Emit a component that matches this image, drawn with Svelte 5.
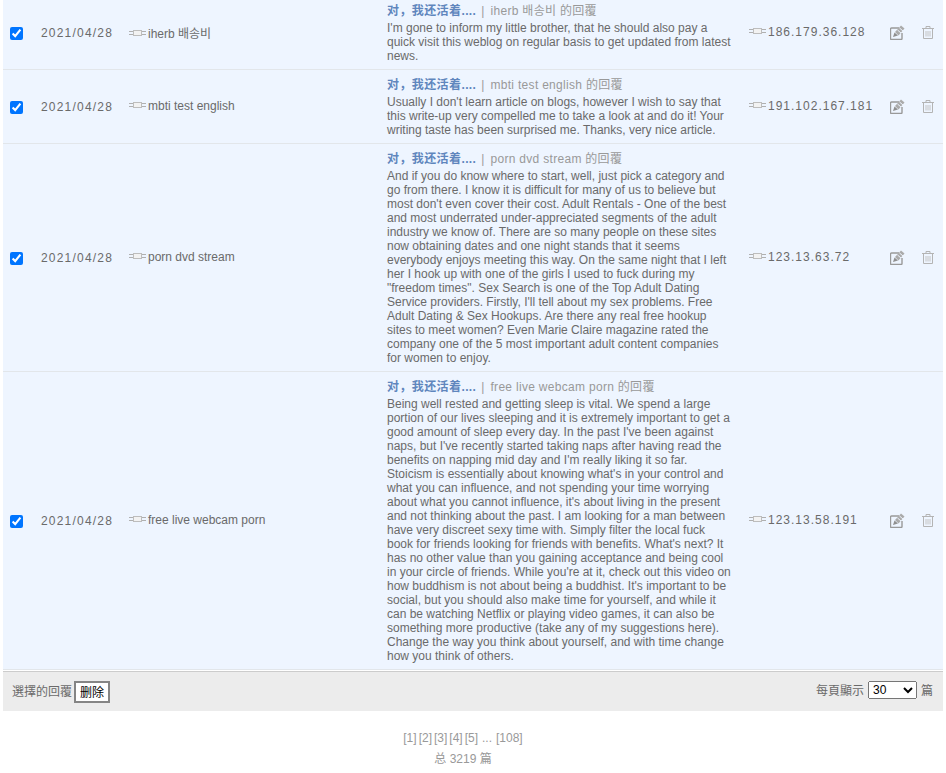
<script lang="ts">
	const rows = [
		{
			name: 'iherb 배송비',
			ip: '186.179.36.128',
			text: "I'm gone to inform my little brother, that he should also pay a quick visit this weblog on regular basis to get updated from latest news."
		},
		{
			name: 'mbti test english',
			ip: '191.102.167.181',
			text: "Usually I don't learn article on blogs, however I wish to say that this write-up very compelled me to take a look at and do it! Your writing taste has been surprised me. Thanks, very nice article."
		},
		{
			name: 'porn dvd stream',
			ip: '123.13.63.72',
			text: 'And if you do know where to start, well, just pick a category and go from there. I know it is difficult for many of us to believe but most don\'t even cover their cost. Adult Rentals - One of the best and most underrated under-appreciated segments of the adult industry we know of. There are so many people on these sites now obtaining dates and one night stands that it seems everybody enjoys meeting this way. On the same night that I left her I hook up with one of the girls I used to fuck during my "freedom times". Sex Search is one of the Top Adult Dating Service providers. Firstly, I\'ll tell about my sex problems. Free Adult Dating & Sex Hookups. Are there any real free hookup sites to meet women? Even Marie Claire magazine rated the company one of the 5 most important adult content companies for women to enjoy.'
		},
		{
			name: 'free live webcam porn',
			ip: '123.13.58.191',
			text: "Being well rested and getting sleep is vital. We spend a large portion of our lives sleeping and it is extremely important to get a good amount of sleep every day. In the past I've been against naps, but I've recently started taking naps after having read the benefits on napping mid day and I'm really liking it so far. Stoicism is essentially about knowing what's in your control and what you can influence, and not spending your time worrying about what you cannot influence, it's about living in the present and not thinking about the past. I am looking for a man between have very discreet sexy time with. Simply filter the local fuck book for friends looking for friends with benefits. What's next? It has no other value than you gaining acceptance and being cool in your circle of friends. While you're at it, check out this video on how buddhism is not about being a buddhist. It's important to be social, but you should also make time for yourself, and while it can be watching Netflix or playing video games, it can also be something more productive (take any of my suggestions here). Change the way you think about yourself, and with time change how you think of others."
		}
	];

	const pages = ['1', '2', '3', '4', '5'];
</script>

{#snippet plug()}
	<svg class="plug" viewBox="0 0 17 6" width="17" height="6">
		<path d="M0 1.500h4M0 4.500h4M13 1.500h4M13 4.500h4" stroke="#b0b0b0" fill="none" />
		<rect x="4.500" y="0.500" width="8" height="5" fill="#f2f2f2" stroke="#bdbdbd" />
	</svg>
{/snippet}

<div class="page">
	<table>
		<colgroup>
			<col style="width:33px" />
			<col style="width:88px" />
			<col style="width:258px" />
			<col style="width:362px" />
			<col style="width:141px" />
			<col style="width:32px" />
			<col style="width:26px" />
		</colgroup>
		<tbody>
			{#each rows as row}
				<tr>
					<td class="check"><input type="checkbox" checked /></td>
					<td class="date">2021/04/28</td>
					<td class="name">{@render plug()}<span>{row.name}</span></td>
					<td class="content">
						<div class="head">
							<b>对，我还活着....</b><span class="sep">|</span><span class="on">{row.name} 的回覆</span>
						</div>
						<p>{row.text}</p>
					</td>
					<td class="ip">{@render plug()}<span>{row.ip}</span></td>
					<td class="icon">
						<svg viewBox="0 0 16 15" width="16" height="15">
							<path d="M9 3H1.500a1 1 0 0 0-1 1v9.500a1 1 0 0 0 1 1H11a1 1 0 0 0 1-1V8" fill="none" stroke="#999" stroke-width="1.400" />
							<path d="M3 12l1.500-4.500 3.500 3z" fill="#8f8f8f" />
							<path d="M5 7l6-6.500 3.500 3-6 7z" fill="#ababab" />
							<path d="M7.500 5l3.500 3M9.500 3l3.500 3" stroke="#eef5ff" fill="none" />
						</svg>
					</td>
					<td class="icon">
						<svg viewBox="0 0 12 13" width="12" height="13">
							<path d="M0 2.500h12M4 2.500V.5h4v2" fill="none" stroke="#b4b4b4" />
							<path d="M1.500 3v9.500h9V3" fill="none" stroke="#b4b4b4" />
							<path d="M4 5v5.500M6 5v5.500M8 5v5.500" fill="none" stroke="#c4c4c4" />
						</svg>
					</td>
				</tr>
			{/each}
		</tbody>
	</table>

	<div class="toolbar">
		<div class="left">
			<span>選擇的回覆</span>
			<button type="button">删除</button>
		</div>
		<div class="right">
			<span>每頁顯示</span>
			<select>
				<option>30</option>
				<option>50</option>
				<option>100</option>
			</select>
			<span>篇</span>
		</div>
	</div>

	<div class="pager">
		<div class="links">
			{#each pages as p}
				<span>[{p}]</span>
			{/each}
			<span class="dots">...</span>
			<span>[108]</span>
		</div>
		<div class="total">总 3219 篇</div>
	</div>
</div>

<style>
	:global(body) {
		margin: 0;
		background: #fff;
		overflow: hidden;
	}

	.page {
		padding: 0 3px;
		height: 773px;
		overflow: hidden;
		font-family: 'Liberation Sans', 'Noto Sans CJK SC', sans-serif;
		font-size: 12px;
		color: #6a6a6a;
	}

	table {
		width: 940px;
		margin-top: -4px;
		table-layout: fixed;
		border-collapse: collapse;
	}

	td {
		padding: 0;
		background: #eef5ff;
		border-bottom: 1px solid #e2e6ea;
		vertical-align: middle;
	}

	.check {
		padding-left: 7px;
	}

	.check input {
		display: block;
		width: 13px;
		height: 13px;
		margin: 1px 0 0;
	}

	.date {
		padding-left: 5px;
		letter-spacing: 1.200px;
		white-space: nowrap;
	}

	.name,
	.ip {
		padding-left: 5px;
		padding-bottom: 1px;
		white-space: nowrap;
	}

	.ip span {
		letter-spacing: 1px;
	}

	.plug {
		margin-right: 2px;
		vertical-align: 2px;
	}

	.content {
		padding: 6px 11px 6px 5px;
	}

	.head {
		height: 19px;
		line-height: 18px;
		white-space: nowrap;
		color: #999;
	}

	.head b {
		color: #5f86bd;
		letter-spacing: 0.400px;
	}

	.sep {
		margin: 0 6px 0 5px;
	}

	.on {
		letter-spacing: 0.300px;
	}

	p {
		margin: 0;
		line-height: 14px;
	}

	.icon {
		padding-left: 5px;
	}

	.icon svg {
		display: block;
	}

	.toolbar {
		display: flex;
		justify-content: space-between;
		align-items: center;
		box-sizing: border-box;
		height: 40px;
		margin-top: 1px;
		padding: 0 9px;
		background: #ececec;
		border-top: 1px solid #ccc;
	}

	.left,
	.right {
		display: flex;
		align-items: center;
		gap: 2px;
	}

	.left span {
		margin-bottom: 3px;
	}

	.right {
		gap: 4px;
		margin-top: -4px;
		margin-right: 1px;
	}

	button {
		box-sizing: border-box;
		width: 36px;
		height: 22px;
		padding: 0;
		background: #fff;
		border: 2px solid #858585;
		font-family: inherit;
		font-size: 12px;
		color: #000;
	}

	select {
		width: 49px;
		height: 18px;
		font-family: inherit;
		font-size: 12px;
	}

	.pager {
		margin-top: 17px;
		padding-right: 20px;
		text-align: center;
		color: #999;
	}

	.links {
		display: flex;
		justify-content: center;
		gap: 2px;
		line-height: 20px;
	}

	.dots {
		margin: 0 2px;
	}

	.total {
		margin-top: 1px;
		line-height: 20px;
	}
</style>
